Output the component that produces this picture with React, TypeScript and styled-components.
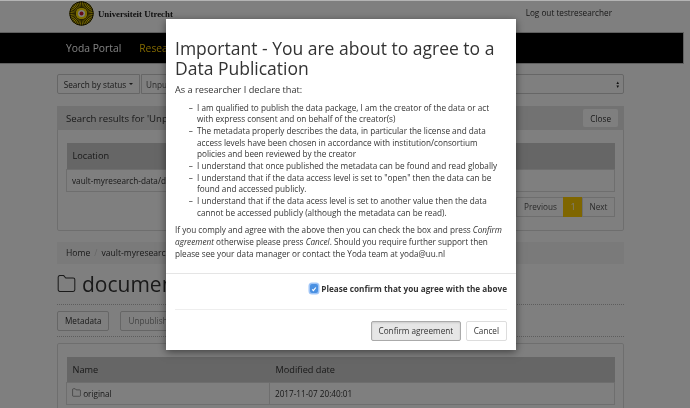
import React from 'react';
import styled, { createGlobalStyle } from 'styled-components';

const GlobalStyle = createGlobalStyle`
  html, body {
    margin: 0;
    height: 408px;
    overflow: hidden;
    background: #fff;
    font-family: "Open Sans", "Noto Sans", sans-serif;
    color: #333;
  }
  * { box-sizing: border-box; }
`;

const Stage = styled.div`
  position: relative;
  width: 690px;
  height: 408px;
  overflow: hidden;
  filter: blur(0.3px);
`;

const Page = styled.div`
  width: 683px;
  padding-top: 1px;
`;

const TopBar = styled.header`
  height: 32px;
  padding: 0 71px 0 69px;
  display: flex;
  align-items: flex-start;
  justify-content: space-between;
`;

const Brand = styled.div`
  display: flex;
  align-items: center;
  gap: 4px;
  height: 25px;
  font-family: "Liberation Serif", serif;
  font-weight: 700;
  font-size: 8.8px;
  color: #222;
`;

const LogOut = styled.span`
  font-size: 8.2px;
  line-height: 24px;
`;

const NavBar = styled.nav`
  height: 30px;
  background: #000;
  box-shadow: 0 0 0 1px rgba(0, 0, 0, 0.25);
  padding-left: 66px;
  display: flex;
  align-items: center;
  gap: 18px;
  font-size: 10.3px;
  color: #fff;
`;

const NavLink = styled.span<{ $active?: boolean }>`
  color: ${p => (p.$active ? '#ffcd00' : '#fff')};
`;

const Container = styled.main`
  width: 567px;
  margin-left: 57px;
  padding-top: 11px;
  font-size: 8.2px;
`;

const SearchRow = styled.div`
  display: flex;
  height: 20px;
  gap: 1px;
`;

const StatusButton = styled.div`
  width: 83px;
  border: 1px solid #ccc;
  border-radius: 2px 0 0 2px;
  display: flex;
  align-items: center;
  justify-content: center;
  gap: 3px;
  &::after {
    content: '';
    border: 2.5px solid transparent;
    border-top-color: #333;
    border-bottom: 0;
  }
`;

const SelectBox = styled.div`
  flex: 1;
  border: 1px solid #ccc;
  border-radius: 0 2px 2px 0;
  padding: 0 3px 0 4px;
  display: flex;
  align-items: center;
  justify-content: space-between;
  color: #555;
`;

const Arrows = styled.span`
  font-size: 4.5px;
  line-height: 4px;
  color: #222;
  text-align: center;
`;

const Panel = styled.section<{ $top: number }>`
  margin-top: ${p => p.$top}px;
  border: 1px solid #ddd;
  border-radius: 2px;
`;

const PanelHeading = styled.div`
  height: 24px;
  margin: -1px -1px 0;
  padding: 0 6px 0 9px;
  background: #e5e5e5;
  display: flex;
  align-items: center;
  justify-content: space-between;
  font-size: 9.6px;
`;

const PanelBody = styled.div`
  padding: 13px 8px 13px;
`;

const Button = styled.div`
  height: 20px;
  padding: 0 7px;
  border: 1px solid #ccc;
  border-radius: 2px;
  background: #fff;
  display: inline-flex;
  align-items: center;
  font-size: 8.2px;
`;

const GhostButton = styled(Button)`
  color: #888;
`;

const CloseButton = styled(Button)`
  height: 18px;
  border: 0;
`;

const Table = styled.table`
  width: 100%;
  border-collapse: collapse;
  font-size: 8.2px;
`;

const HeadCell = styled.th`
  height: 26px;
  padding: 0 6px;
  background: #ccc;
  text-align: left;
  font-weight: 400;
  font-size: 9.2px;
`;

const Cell = styled.td<{ $width?: number }>`
  height: 22px;
  padding: 0 5px;
  border: 1px solid #ddd;
  ${p => (p.$width ? `width: ${p.$width}px;` : '')}
`;

const Pagination = styled.div`
  display: flex;
  justify-content: flex-end;
  height: 20px;
  margin-top: 5px;
`;

const PageItem = styled.div<{ $current?: boolean }>`
  padding: 0 6.5px;
  display: flex;
  align-items: center;
  border: 1px solid #ddd;
  margin-left: -1px;
  background: ${p => (p.$current ? '#ffcd00' : '#fff')};
  border-color: ${p => (p.$current ? '#ffcd00' : '#ddd')};
  color: ${p => (p.$current ? '#fff' : '#555')};
`;

const Breadcrumb = styled.div`
  margin-top: 11px;
  height: 22px;
  padding: 0 9px;
  background: #f5f5f5;
  display: flex;
  align-items: center;
  gap: 4px;
  font-size: 8.6px;
`;

const Separator = styled.span`
  color: #ccc;
`;

const Title = styled.h1`
  margin: 8px 0 0;
  height: 33px;
  padding-bottom: 8px;
  display: flex;
  align-items: center;
  gap: 6px;
  font-size: 21px;
  font-weight: 400;
  color: #333;
  border-bottom: 1px dotted #bbb;
`;

const Actions = styled.div`
  display: flex;
  gap: 11px;
  padding: 6px 0 5px;
  border-bottom: 1px dotted #bbb;
`;

const Backdrop = styled.div`
  position: absolute;
  inset: 1px 0 0;
  background: rgba(0, 0, 0, 0.5);
`;

const TopStrip = styled.div`
  position: absolute;
  inset: 0 0 auto;
  height: 1px;
  background: #b4b4b4;
`;

const Modal = styled.div`
  position: absolute;
  left: 166px;
  top: 19px;
  width: 350px;
  height: 331px;
  background: #fff;
  box-shadow: 0 2px 8px rgba(0, 0, 0, 0.5);
  display: flex;
  flex-direction: column;
  font-size: 8.2px;
  line-height: 11.65px;
  color: #333;
`;

const ModalBody = styled.div`
  padding: 19px 9px 0;
  height: 255px;
  border-bottom: 1px solid #e5e5e5;
`;

const ModalTitle = styled.h2`
  margin: 0 0 6px;
  font-size: 17.5px;
  line-height: 20px;
  font-weight: 400;
  color: #333;
`;

const Para = styled.p<{ $lead?: boolean }>`
  margin: 0;
  font-size: ${p => (p.$lead ? '9.2px' : 'inherit')};
`;

const Declarations = styled.ul`
  margin: 6px 0 6px;
  padding: 0 0 0 22px;
  list-style: '–  ';
`;

const ConfirmRow = styled.label`
  height: 36px;
  margin: 0 9px;
  padding-bottom: 6px;
  display: flex;
  align-items: center;
  justify-content: flex-end;
  gap: 2px;
  font-weight: 700;
  border-bottom: 1px solid #eee;
`;

const Check = styled.span`
  width: 8.5px;
  height: 8.5px;
  border-radius: 2px;
  background: #4a90e2;
  box-shadow: 0 0 0 1.5px rgba(80, 150, 240, 0.55);
  display: flex;
  align-items: center;
  justify-content: center;
  margin-right: 1px;
`;

const ModalFooter = styled.div`
  flex: 1;
  padding: 0 9px 9px;
  display: flex;
  align-items: flex-end;
  justify-content: flex-end;
  gap: 5px;
`;

const ModalButton = styled.div<{ $pressed?: boolean }>`
  height: 20px;
  padding: 0 ${p => (p.$pressed ? 6.5 : 7)}px;
  border: 1px solid ${p => (p.$pressed ? '#aaa' : '#ddd')};
  border-radius: 2px;
  background: ${p => (p.$pressed ? '#e6e6e6' : '#fff')};
  box-shadow: ${p => (p.$pressed ? 'inset 0 1px 2px rgba(0,0,0,.12)' : 'none')};
  display: flex;
  align-items: center;
`;

function Logo () {
  const rays = Array.from({ length: 36 }, (_, i) => (i * 360) / 36);

  return (
    <svg width='25' height='25' viewBox='0 0 50 50'>
      <circle cx='25' cy='25' r='24' fill='#ffe100' />
      {rays.map((a) => (
        <line key={a} x1='25' y1='14' x2='25' y2='1' stroke='#1c1800' strokeWidth='1.5' transform={`rotate(${a} 25 25)`} />
      ))}
      <circle cx='25' cy='25' r='23.5' fill='none' stroke='#1c1800' strokeWidth='2' />
      <circle cx='25' cy='25' r='11' fill='#ffe100' />
      <circle cx='25' cy='25' r='7' fill='#fff' />
      <circle cx='25' cy='25' r='4' fill='#c8102e' />
    </svg>
  );
}

function FolderIcon ({ size }: { size: number }) {
  return (
    <svg width={size} height={size} viewBox='0 0 24 24' fill='none' stroke='currentColor' strokeWidth='1.3' strokeLinejoin='round'>
      <path d='M1.5 4a2 2 0 0 1 2-2h5l2.500 3h9.500a2 2 0 0 1 2 2v13a2 2 0 0 1-2 2h-17a2 2 0 0 1-2-2z' />
    </svg>
  );
}

export default function App () {
  return (
    <Stage>
      <GlobalStyle />
      <Page>
        <TopBar>
          <Brand><Logo />Universiteit Utrecht</Brand>
          <LogOut>Log out testresearcher</LogOut>
        </TopBar>
        <NavBar>
          <NavLink>Yoda Portal</NavLink>
          <NavLink $active>Research</NavLink>
        </NavBar>
        <Container>
          <SearchRow>
            <StatusButton>Search by status</StatusButton>
            <SelectBox>Unpublished<Arrows>▲<br />▼</Arrows></SelectBox>
          </SearchRow>
          <Panel $top={12}>
            <PanelHeading>
              Search results for 'Unpublished'
              <CloseButton>Close</CloseButton>
            </PanelHeading>
            <PanelBody>
              <Table>
                <thead><tr><HeadCell>Location</HeadCell></tr></thead>
                <tbody><tr><Cell>vault-myresearch-data/documents</Cell></tr></tbody>
              </Table>
              <Pagination>
                <PageItem>Previous</PageItem>
                <PageItem $current>1</PageItem>
                <PageItem>Next</PageItem>
              </Pagination>
            </PanelBody>
          </Panel>
          <Breadcrumb>Home<Separator>/</Separator>vault-myresearch-data</Breadcrumb>
          <Title><FolderIcon size={19} />documents</Title>
          <Actions>
            <Button>Metadata</Button>
            <GhostButton>Unpublish</GhostButton>
          </Actions>
          <Panel $top={6}>
            <PanelBody>
              <Table>
                <thead><tr><HeadCell>Name</HeadCell><HeadCell>Modified date</HeadCell></tr></thead>
                <tbody><tr><Cell $width={203}><FolderIcon size={9} /> original</Cell><Cell>2017-11-07 20:40:01</Cell></tr></tbody>
              </Table>
            </PanelBody>
          </Panel>
        </Container>
      </Page>
      <Backdrop />
      <TopStrip />
      <Modal>
        <ModalBody>
          <ModalTitle>Important - You are about to agree to a Data Publication</ModalTitle>
          <Para $lead>As a researcher I declare that:</Para>
          <Declarations>
            <li>I am qualified to publish the data package, I am the creator of the data or act with express consent and on behalf of the creator(s)</li>
            <li>The metadata properly describes the data, in particular the license and data access levels have been chosen in accordance with institution/consortium policies and been reviewed by the creator</li>
            <li>I understand that once published the metadata can be found and read globally</li>
            <li>I understand that if the data access level is set to "open" then the data can be found and accessed publicly.</li>
            <li>I understand that if the data acess level is set to another value then the data cannot be accessed publicly (although the metadata can be read).</li>
          </Declarations>
          <Para>If you comply and agree with the above then you can check the box and press <em>Confirm agreement</em> otherwise please press <em>Cancel</em>. Should you require further support then please see your data manager or contact the Yoda team at yoda@uu.nl</Para>
        </ModalBody>
        <ConfirmRow>
          <Check>
            <svg width='6' height='6' viewBox='0 0 10 10' fill='none' stroke='#fff' strokeWidth='2'><path d='M2 5.500l2 2 4-5' /></svg>
          </Check>
          Please confirm that you agree with the above
        </ConfirmRow>
        <ModalFooter>
          <ModalButton $pressed>Confirm agreement</ModalButton>
          <ModalButton>Cancel</ModalButton>
        </ModalFooter>
      </Modal>
    </Stage>
  );
}
